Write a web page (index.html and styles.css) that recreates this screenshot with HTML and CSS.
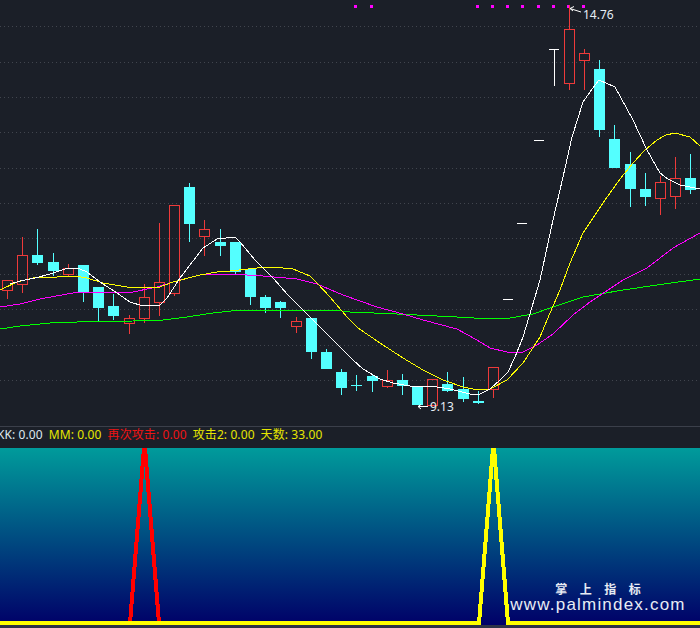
FILE: index.html
```html
<!DOCTYPE html>
<html lang="en">
<head>
    <meta charset="UTF-8">
    <title>掌上指标</title>
    <link rel="stylesheet" href="styles.css">
</head>
<body>
    <div class="chart">
        <!-- Price panel -->
        <svg class="price" width="700" height="426" viewBox="0 0 700 426">
            <path class="grid" d="M0 26.5H700M0 62.5H700M0 97.5H700M0 132.5H700M0 168.5H700M0 203.5H700M0 238.5H700M0 274.5H700M0 309.5H700M0 345.5H700M0 380.5H700"/>

            <!-- Top signal dots -->
            <g class="dots">
                <rect x="354" y="5" width="3" height="3"/><rect x="370" y="5" width="3" height="3"/>
                <rect x="476" y="5" width="3" height="3"/><rect x="491" y="5" width="3" height="3"/>
                <rect x="506" y="5" width="3" height="3"/><rect x="521" y="5" width="3" height="3"/>
                <rect x="537" y="5" width="3" height="3"/><rect x="552" y="5" width="3" height="3"/>
                <rect x="567" y="5" width="3" height="3"/><rect x="582" y="5" width="3" height="3"/>
            </g>

            <!-- Wicks -->
            <path class="wick-down" d="M37.5 229V265M53.5 253V276M83.5 292V302M98.5 308V321M113.5 294V320M189.5 183V242M220.5 229V256M235.5 272V275M250.5 268V305M265.5 295V313M280.5 301V318M311.5 352V359M326.5 349V352M341.5 369V395M356.5 375V391M372.5 374V392M402.5 374V395M447.5 372V392M463.5 377V402M478.5 391V404M599.5 60V137M614.5 125V139M630.5 152V207M645.5 173V206M690.5 154V194"/>
            <path class="wick-up" d="M7.5 290V299M22.5 237V255M22.5 284V293M68.5 264V268M68.5 275V277M129.5 315V318M129.5 323V334M144.5 284V297M144.5 318V323M159.5 223V282M159.5 302V316M174.5 293V296M204.5 220V229M204.5 236V256M296.5 317V321M296.5 327V333M387.5 370V380M387.5 387V388M493.5 389V398M569.5 5V29M569.5 83V90M584.5 49V53M584.5 60V90M660.5 176V182M660.5 198V215M675.5 157V178M675.5 196V209"/>

            <!-- Falling candles -->
            <g class="body-down">
                <rect x="32" y="255" width="11" height="8"/>
                <rect x="48" y="262" width="11" height="9"/>
                <rect x="78" y="265" width="11" height="27"/>
                <rect x="93" y="287" width="11" height="21"/>
                <rect x="108" y="306" width="11" height="10"/>
                <rect x="184" y="187" width="11" height="37"/>
                <rect x="215" y="242" width="11" height="4"/>
                <rect x="230" y="242" width="11" height="30"/>
                <rect x="245" y="269" width="11" height="28"/>
                <rect x="260" y="297" width="11" height="11"/>
                <rect x="275" y="302" width="11" height="6"/>
                <rect x="306" y="318" width="11" height="34"/>
                <rect x="321" y="352" width="11" height="17"/>
                <rect x="336" y="372" width="11" height="16"/>
                <rect x="351" y="385" width="11" height="1"/>
                <rect x="367" y="376" width="11" height="5"/>
                <rect x="397" y="380" width="11" height="6"/>
                <rect x="412" y="386" width="11" height="19"/>
                <rect x="442" y="384" width="11" height="7"/>
                <rect x="458" y="389" width="11" height="10"/>
                <rect x="473" y="401" width="11" height="2"/>
                <rect x="594" y="69" width="11" height="61"/>
                <rect x="609" y="139" width="11" height="29"/>
                <rect x="625" y="164" width="11" height="25"/>
                <rect x="640" y="189" width="11" height="8"/>
                <rect x="685" y="178" width="11" height="12"/>
            </g>

            <!-- Rising candles -->
            <g class="body-up">
                <rect x="2.5" y="280.5" width="10" height="10"/>
                <rect x="17.5" y="255.5" width="10" height="29"/>
                <rect x="63.5" y="268.5" width="10" height="6"/>
                <rect x="124.5" y="318.5" width="10" height="5"/>
                <rect x="139.5" y="297.5" width="10" height="21"/>
                <rect x="154.5" y="282.5" width="10" height="20"/>
                <rect x="169.5" y="205.5" width="10" height="88"/>
                <rect x="199.5" y="229.5" width="10" height="7"/>
                <rect x="291.5" y="321.5" width="10" height="5"/>
                <rect x="382.5" y="380.5" width="10" height="6"/>
                <rect x="427.5" y="379.5" width="10" height="26"/>
                <rect x="488.5" y="367.5" width="10" height="22"/>
                <rect x="564.5" y="29.5" width="10" height="54"/>
                <rect x="579.5" y="53.5" width="10" height="7"/>
                <rect x="655.5" y="182.5" width="10" height="16"/>
                <rect x="670.5" y="178.5" width="10" height="18"/>
            </g>

            <!-- Moving averages -->
            <polyline class="ma-green" points="0,329 20,326 50,323 77,322 133,321 163,320 187,317 213,313 240,310 273,310 333,310 350,312 397,314 457,317 490,319 510,318 533,314 553,307 583,297 623,290 657,285 700,279"/>
            <polyline class="ma-magenta" points="0,307 20,304 40,299 67,294 80,292 133,292 157,287 180,280 200,275 230,274 263,276 297,279 317,284 343,295 377,307 403,314 423,320 457,329 477,340 490,348 507,352 523,352 537,345 553,334 573,315 590,302 623,280 647,268 673,248 700,233"/>
            <polyline class="ma-yellow" points="0,290 17,282 33,278 57,277 75,276 87,278 103,283 127,287 157,288 173,282 200,275 217,272 230,271 257,268 273,267 293,269 310,276 317,283 330,297 347,317 358,328 380,343 403,358 423,370 443,380 463,387 478,390 490,389 507,380 523,363 540,337 550,313 560,290 570,263 583,233 593,218 605,200 620,179 633,163 645,150 657,140 666,135 675,133 690,137 700,146"/>
            <polyline class="ma-white" points="10,284 20,281 35,278 50,274 68,268 80,269 87,272 100,282 117,293 130,302 143,306 160,305 167,298 180,278 203,248 217,239 235,237 240,242 255,260 273,278 288,295 303,310 333,340 353,360 363,369 380,379 393,383 410,386 437,387 450,389 470,394 478,395 490,389 500,380 508,372 515,357 523,337 532,307 540,280 548,243 553,220 563,177 572,137 578,118 583,102 590,92 599,80 615,87 633,120 647,150 660,173 668,179 680,185 700,189"/>

            <!-- Level marks -->
            <path class="mark" d="M549 49.500H559M554.500 49V86M534 140.500H544M517 223.500H527M503 299.500H513"/>

            <!-- High and low labels -->
            <path class="arrow" d="M581 12L570 8.500M570 8.500L574 6.500M570 8.500L573 11M428 406.500H418M418 406.500L421 404.500M418 406.500L421 409"/>
            <text class="price-label" x="583" y="19">14.76</text>
            <text class="price-label" x="430" y="411">9.13</text>
        </svg>

        <!-- Indicator values -->
        <div class="legend">
            <span class="white">KK: 0.00</span>
            <span class="yellow">MM: 0.00</span>
            <span class="red">再次攻击: 0.00</span>
            <span class="yellow">攻击2: 0.00</span>
            <span class="yellow">天数: 33.00</span>
        </div>

        <!-- Indicator panel -->
        <div class="panel">
            <svg class="signals" width="700" height="177" viewBox="0 0 700 177">
                <polyline class="signal-red" points="130,175 144,0 145,0 159,175"/>
                <polyline class="signal-yellow" points="0,175 479,175 493,0 494,0 508,175 700,175"/>
            </svg>
            <div class="watermark">
                <div class="watermark-title">掌 上 指 标</div>
                <div class="watermark-url">www.palmindex.com</div>
            </div>
        </div>
    </div>
</body>
</html>
```

FILE: styles.css
```css
html, body {
    margin: 0;
    height: 100%;
    background: #1b1f28;
    overflow: hidden;
}
.chart {
    display: flex;
    flex-direction: column;
    width: 700px;
    height: 628px;
}
.price {
    display: block;
    flex: none;
    border-bottom: 1px solid #3b3f4a;
}
.grid {
    fill: none;
    stroke: #41454e;
    stroke-width: 1;
    stroke-dasharray: 1 3;
}
.dots rect {
    fill: #ff00ff;
}
.wick-down {
    fill: none;
    stroke: #54ffff;
    shape-rendering: crispEdges;
}
.wick-up {
    fill: none;
    stroke: #ee3a3a;
    shape-rendering: crispEdges;
}
.body-down rect {
    fill: #54ffff;
}
.body-up rect {
    fill: none;
    stroke: #ee3a3a;
    shape-rendering: crispEdges;
}
.ma-green, .ma-magenta, .ma-yellow, .ma-white {
    fill: none;
    stroke-width: 1;
    shape-rendering: crispEdges;
}
.ma-green {
    stroke: #00ff00;
}
.ma-magenta {
    stroke: #ff00ff;
}
.ma-yellow {
    stroke: #ffff00;
}
.ma-white {
    stroke: #ffffff;
}
.mark {
    fill: none;
    stroke: #ffffff;
    shape-rendering: crispEdges;
}
.arrow {
    fill: none;
    stroke: #ffffff;
}
.price-label {
    fill: #e6eef5;
    font-family: "Noto Sans", sans-serif;
    font-size: 12px;
}
.legend {
    display: flex;
    flex: none;
    gap: 6px;
    height: 21px;
    margin-left: -3px;
    font-family: "Noto Sans", "Noto Sans CJK SC", sans-serif;
    font-size: 12px;
    letter-spacing: 0.1px;
    line-height: 16px;
    white-space: nowrap;
}
.white {
    color: #dfe8f0;
}
.yellow {
    color: #e6e600;
}
.red {
    color: #f01414;
}
.panel {
    position: relative;
    flex: none;
    width: 700px;
    height: 177px;
    background: linear-gradient(#009b9b, #000068);
    border-bottom: 3px solid #2e3248;
}
.signals {
    display: block;
}
.signal-red, .signal-yellow {
    fill: none;
    stroke-width: 4;
    shape-rendering: crispEdges;
}
.signal-red {
    stroke: #ff0000;
}
.signal-yellow {
    stroke: #ffff00;
}
.watermark {
    position: absolute;
    left: 510px;
    top: 133px;
    width: 176px;
    color: #e8ecf4;
    text-align: center;
}
.watermark-title {
    font-family: "Noto Sans CJK SC", sans-serif;
    font-size: 12px;
    font-weight: bold;
    line-height: 15px;
    word-spacing: 9.800px;
}
.watermark-url {
    font-family: "Liberation Sans", sans-serif;
    font-size: 17px;
    line-height: 17px;
    letter-spacing: 1.200px;
}
```
